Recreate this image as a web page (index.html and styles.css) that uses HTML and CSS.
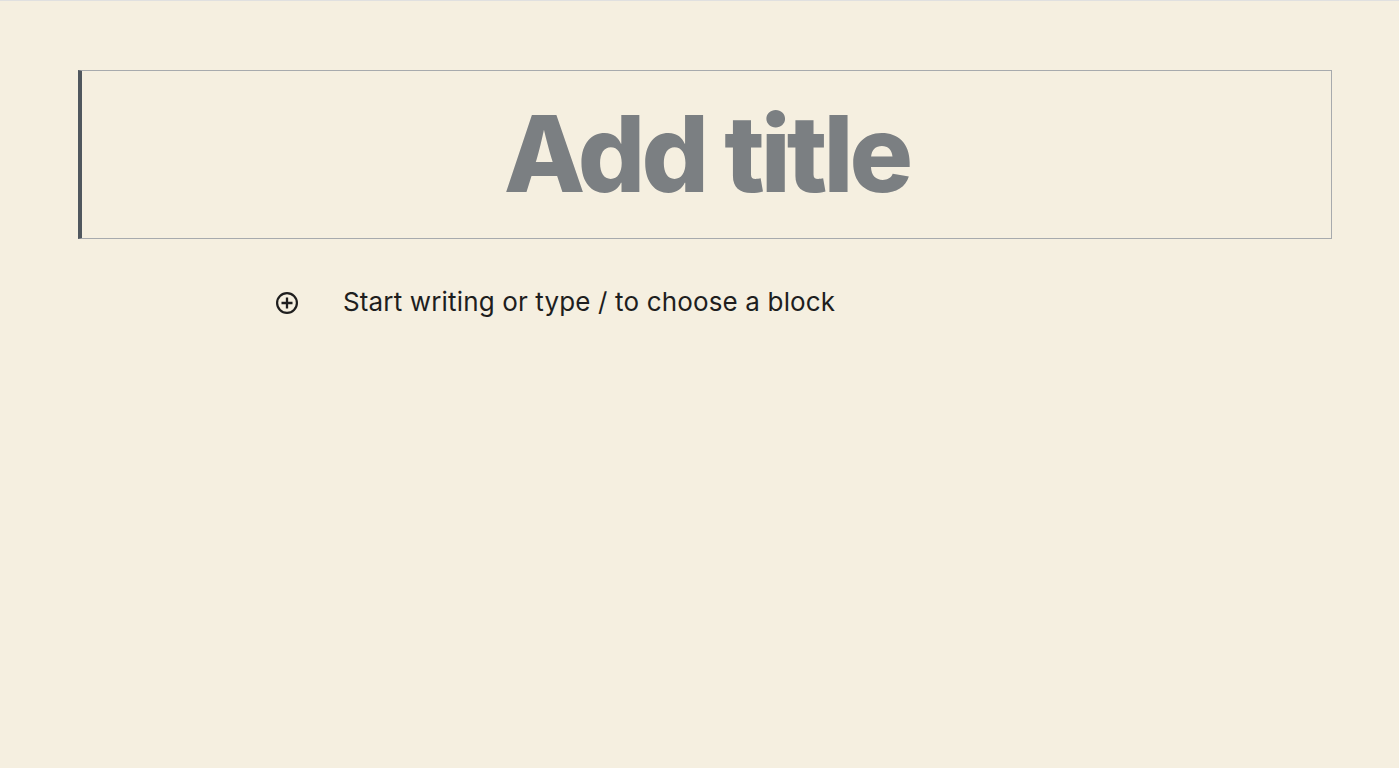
FILE: index.html
```html
<!DOCTYPE html>
<html lang="en">
<head>
<meta charset="utf-8">
<title>Editor</title>
<link rel="stylesheet" href="styles.css">
</head>
<body>
<div class="canvas">
  <div class="title-box">
    <h1 class="title">Add title</h1>
  </div>
  <div class="block-row">
    <button class="inserter" aria-label="Add block">
      <svg width="24" height="24" viewBox="0 0 24 24"><circle cx="12" cy="12" r="9.9" fill="none" stroke="#1e1e1e" stroke-width="2.2"/><path d="M12 6.5v11M6.5 12h11" stroke="#1e1e1e" stroke-width="2.3" fill="none"/></svg>
    </button>
    <p class="placeholder">Start writing or type / to choose a block</p>
  </div>
</div>
</body>
</html>
```
FILE: styles.css
```css
html, body {
  margin: 0;
  padding: 0;
  height: 100%;
}
body {
  background: #f5efe0;
  font-family: Inter, "Noto Sans", sans-serif;
  border-top: 1px solid #e0e0e0;
  box-sizing: border-box;
}
.canvas {
  padding: 69px 67px 0 78px;
}
.title-box {
  border: 1px solid #a7aaad;
  border-left: 4px solid #50575e;
  padding: 17px 0 18px;
}
.title {
  margin: 0;
  text-align: center;
  font-size: 106px;
  font-weight: 800;
  line-height: 132px;
  letter-spacing: -4px;
  color: #7b7f82;
}
.block-row {
  display: flex;
  align-items: flex-start;
  margin-top: 43px;
  padding-left: 197px;
}
.inserter {
  width: 24px;
  height: 24px;
  margin-top: 9px;
  padding: 0;
  border: 0;
  background: none;
  display: flex;
}
.placeholder {
  margin: 0 0 0 44px;
  font-size: 26px;
  line-height: 39px;
  letter-spacing: 0.15px;
  color: #1e1e1e;
}
```
